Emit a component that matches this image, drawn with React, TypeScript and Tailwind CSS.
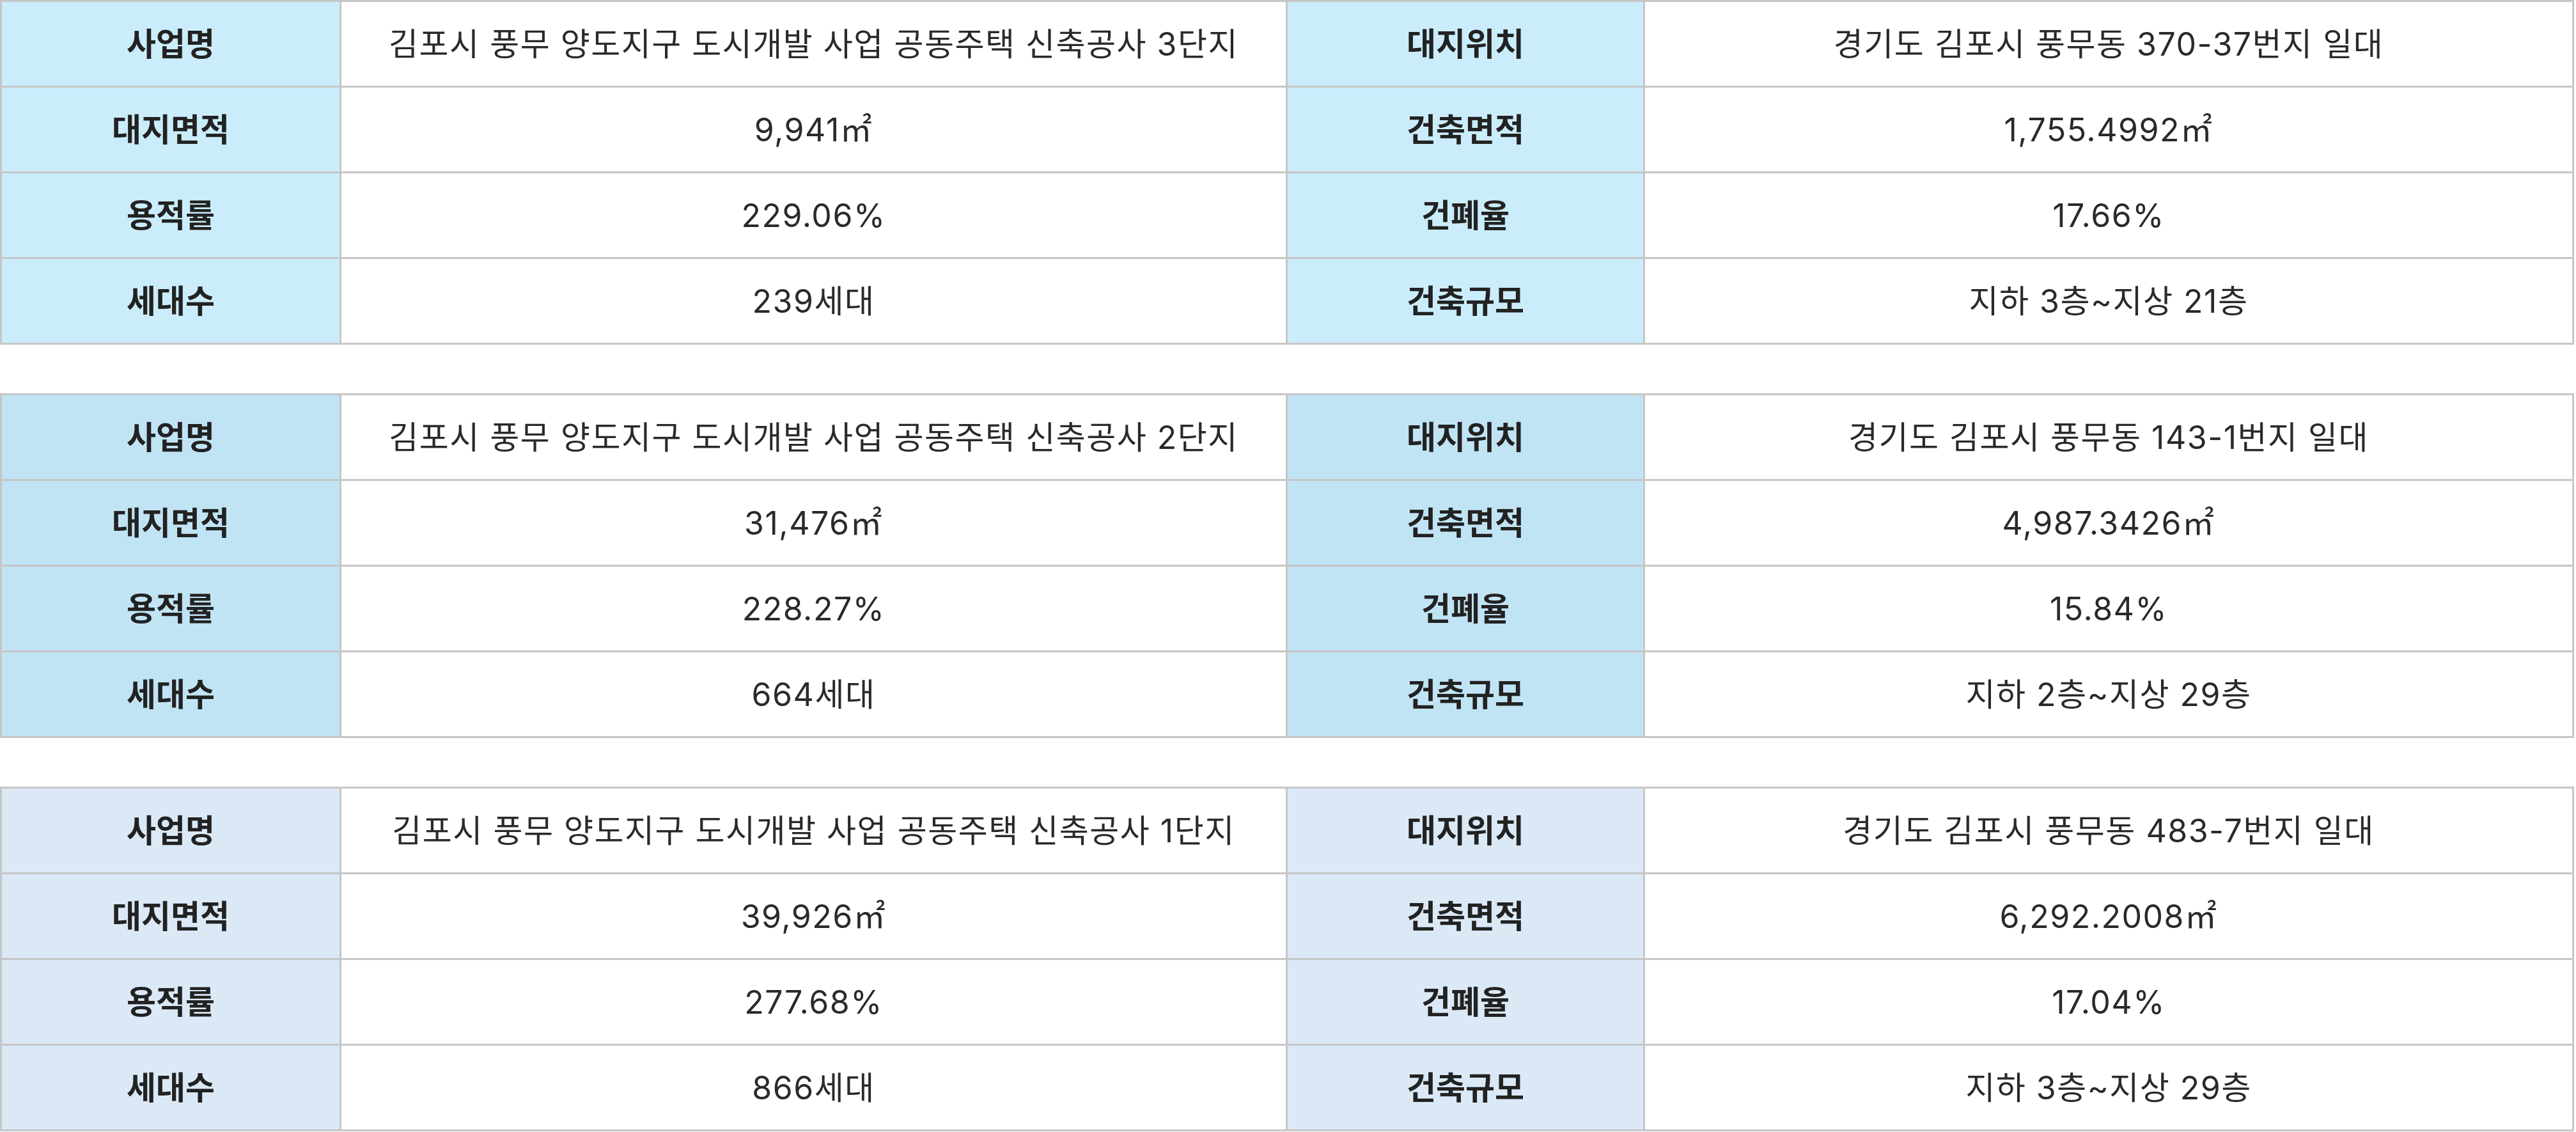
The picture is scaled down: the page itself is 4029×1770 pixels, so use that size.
import React from "react";

type Block = {
  bg: string;
  rows: [string, string, string, string][];
};

const blocks: Block[] = [
  {
    bg: "bg-[#cbedfb]",
    rows: [
      ["사업명", "김포시 풍무 양도지구 도시개발 사업 공동주택 신축공사 3단지", "대지위치", "경기도 김포시 풍무동 370-37번지 일대"],
      ["대지면적", "9,941㎡", "건축면적", "1,755.4992㎡"],
      ["용적률", "229.06%", "건폐율", "17.66%"],
      ["세대수", "239세대", "건축규모", "지하 3층~지상 21층"],
    ],
  },
  {
    bg: "bg-[#c1e4f5]",
    rows: [
      ["사업명", "김포시 풍무 양도지구 도시개발 사업 공동주택 신축공사 2단지", "대지위치", "경기도 김포시 풍무동 143-1번지 일대"],
      ["대지면적", "31,476㎡", "건축면적", "4,987.3426㎡"],
      ["용적률", "228.27%", "건폐율", "15.84%"],
      ["세대수", "664세대", "건축규모", "지하 2층~지상 29층"],
    ],
  },
  {
    bg: "bg-[#dbe9f7]",
    rows: [
      ["사업명", "김포시 풍무 양도지구 도시개발 사업 공동주택 신축공사 1단지", "대지위치", "경기도 김포시 풍무동 483-7번지 일대"],
      ["대지면적", "39,926㎡", "건축면적", "6,292.2008㎡"],
      ["용적률", "277.68%", "건폐율", "17.04%"],
      ["세대수", "866세대", "건축규모", "지하 3층~지상 29층"],
    ],
  },
];

function Table({ block }: { block: Block }) {
  return (
    <div className="grid w-[4026px] grid-cols-[528px_1477px_556px_1450px] grid-rows-[repeat(4,131px)] gap-[3px] border-[3px] border-[#c6c6c6] bg-[#c6c6c6]">
      {block.rows.map((r, i) => (
        <React.Fragment key={i}>
          <div className={`${block.bg} flex items-center justify-center text-[50px] font-bold text-[#222222]`}>{r[0]}</div>
          <div className="flex items-center justify-center bg-white text-[50px] font-normal tracking-[0.03em] text-[#2a2a2a]">{r[1]}</div>
          <div className={`${block.bg} flex items-center justify-center text-[50px] font-bold text-[#222222]`}>{r[2]}</div>
          <div className="flex items-center justify-center bg-white text-[50px] font-normal tracking-[0.03em] text-[#2a2a2a]">{r[3]}</div>
        </React.Fragment>
      ))}
    </div>
  );
}

export default function App() {
  return (
    <div className="flex w-[4029px] flex-col gap-[76px] bg-white font-['Inter','Noto_Sans_CJK_KR',sans-serif] leading-none">
      {blocks.map((b, i) => (
        <Table key={i} block={b} />
      ))}
    </div>
  );
}
